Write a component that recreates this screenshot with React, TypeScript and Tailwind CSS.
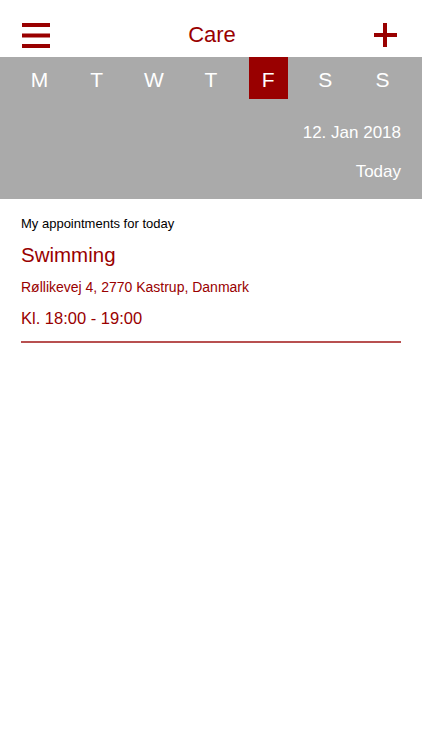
import React from "react";

const days = ["M", "T", "W", "T", "F", "S", "S"];

export default function App() {
  return (
    <div className="w-[422px] h-[750px] bg-white overflow-hidden" style={{ fontFamily: '"Liberation Sans", Arial, sans-serif' }}>
      <div className="h-[57px] pt-[13px] flex items-center justify-between px-[22px]">
        <svg width="28" height="25" viewBox="0 0 28 25">
          <rect x="0" y="0" width="28" height="4" fill="#990000" />
          <rect x="0" y="10.5" width="28" height="4" fill="#990000" />
          <rect x="0" y="21" width="28" height="4" fill="#990000" />
        </svg>
        <div className="text-[22px] text-[#990000] leading-none">Care</div>
        <svg width="23" height="24" viewBox="0 0 23 24" className="mr-[3px]">
          <rect x="9" y="0" width="4" height="24" fill="#990000" />
          <rect x="0" y="10" width="23" height="4" fill="#990000" />
        </svg>
      </div>
      <div className="bg-[#aaaaaa] h-[142px] flex flex-col">
        <div className="grid grid-cols-7 px-[11px] h-[42px]">
          {days.map((d, i) => (
            <div key={i} className="flex justify-center">
              <div
                className={
                  "w-[39px] h-[42px] pt-[3px] flex items-center justify-center text-[21px] text-white " +
                  (i === 4 ? "bg-[#990000]" : "")
                }
              >
                {d}
              </div>
            </div>
          ))}
        </div>
        <div className="text-right pr-[21px] text-white text-[17px] leading-none mt-[25px]">12. Jan 2018</div>
        <div className="text-right pr-[21px] text-white text-[17px] leading-none mt-[22px]">Today</div>
      </div>
      <div className="px-[21px]">
        <div className="text-[13px] text-black h-[20px] leading-[20px] mt-[15px]">My appointments for today</div>
        <div className="text-[20.5px] text-[#990000] h-[22px] leading-[22px] mt-[10px]">Swimming</div>
        <div className="text-[14px] text-[#990000] h-[20px] leading-[20px] mt-[11px]">Røllikevej 4, 2770 Kastrup, Danmark</div>
        <div className="text-[16.5px] text-[#990000] h-[21px] leading-[21px] mt-[11px]">Kl. 18:00 - 19:00</div>
        <div className="h-[2px] bg-[#b85050] mt-[12px]" />
      </div>
    </div>
  );
}
